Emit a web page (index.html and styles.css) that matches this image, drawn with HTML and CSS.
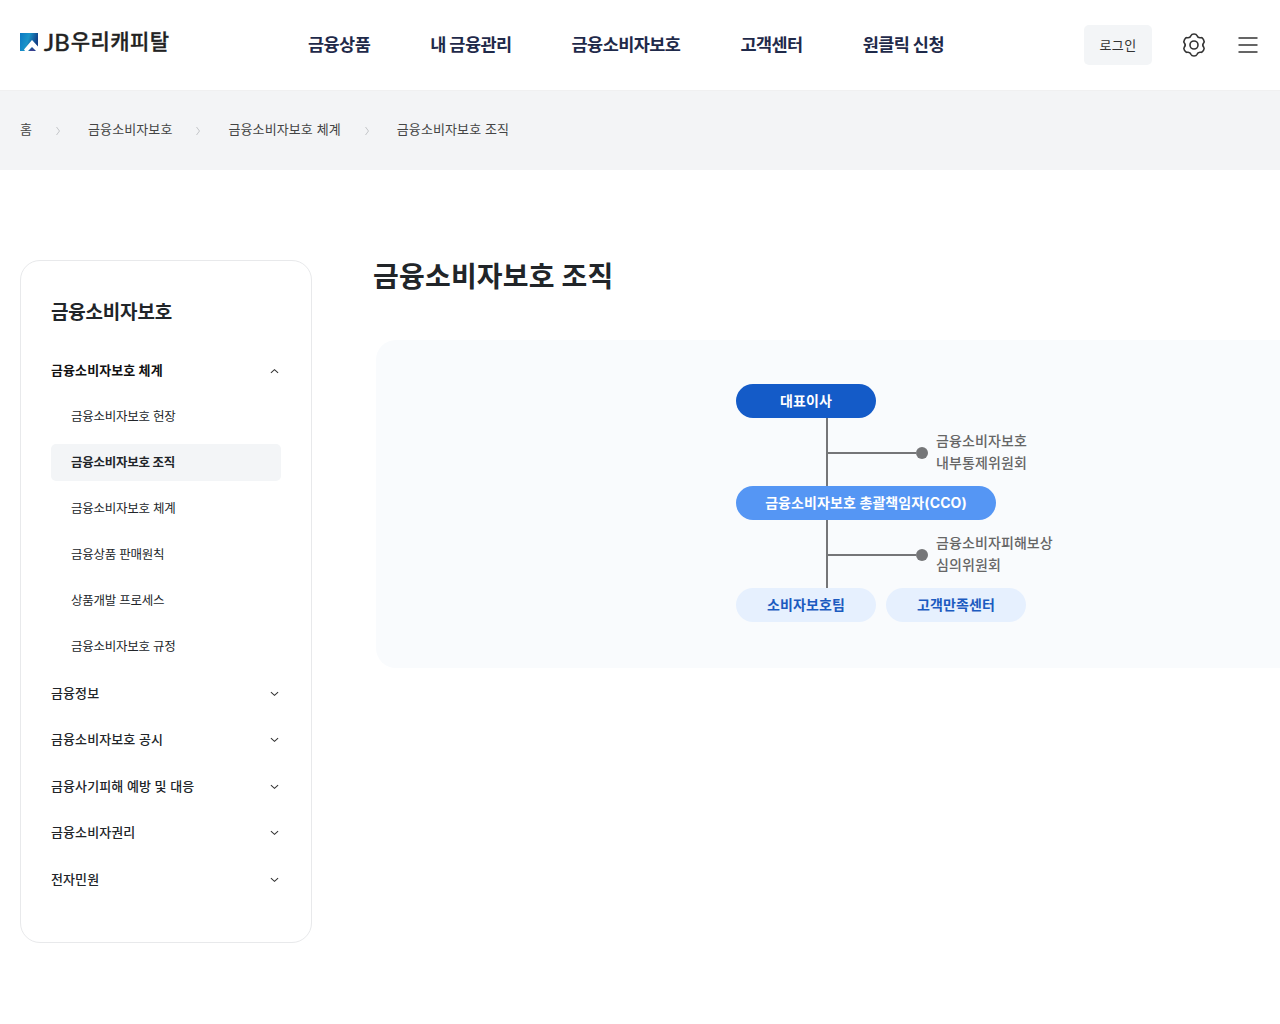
FILE: index.html
```html
<!DOCTYPE html>
<html lang="ko">
<head>
    <meta charset="UTF-8">
    <meta name="viewport" content="width=device-width, initial-scale=1.0">
    <title>금융소비자보호 조직 | JB우리캐피탈</title>
    <link rel="stylesheet" href="styles.css">
</head>
<body>
    <header class="header">
        <a href="#" class="logo">
            <svg class="logo-mark" viewBox="0 0 18 18" aria-hidden="true">
                <defs>
                    <linearGradient id="mark" x1="0" y1="0" x2="1" y2="0.3">
                        <stop offset="0" stop-color="#0a78c4"/>
                        <stop offset="0.5" stop-color="#1a94c8"/>
                        <stop offset="1" stop-color="#123f86"/>
                    </linearGradient>
                </defs>
                <rect width="18" height="18" fill="url(#mark)"/>
                <path d="M4 16.500L12 7l6 6.500V18h-2l-4-4-4 4H5z" fill="#fff"/>
                <path d="M9.500 18l2.500-3 3 3z" fill="#3b3f8f"/>
            </svg>
            <span class="logo-en">JB</span><span class="logo-ko">우리캐피탈</span>
        </a>
        <nav class="gnb">
            <a href="#">금융상품</a>
            <a href="#">내 금융관리</a>
            <a href="#">금융소비자보호</a>
            <a href="#">고객센터</a>
            <a href="#">원클릭 신청</a>
        </nav>
        <div class="util">
            <a href="#" class="login">로그인</a>
            <button type="button" class="icon-btn" aria-label="설정">
                <svg width="24" height="24" viewBox="0 0 24 24">
                    <path d="M9.080 2.440C9.800.6 14.200.6 14.920 2.440Q15.900 5.250 18.820 4.690C20.770 4.390 22.970 8.210 21.740 9.750Q19.800 12 21.740 14.250C22.970 15.790 20.770 19.610 18.820 19.310Q15.900 18.750 14.920 21.560C14.200 23.400 9.800 23.400 9.080 21.560Q8.100 18.750 5.180 19.310C3.230 19.610 1.030 15.790 2.260 14.250Q4.200 12 2.260 9.750C1.030 8.210 3.230 4.390 5.180 4.690Q8.100 5.250 9.080 2.440z"/>
                    <circle cx="12" cy="12" r="4"/>
                </svg>
            </button>
            <button type="button" class="icon-btn" aria-label="전체메뉴">
                <svg width="24" height="24" viewBox="0 0 24 24">
                    <path d="M2.500 5h19M2.500 12h19M2.500 19h19"/>
                </svg>
            </button>
        </div>
    </header>

    <div class="breadcrumb">
        <a href="#">홈</a>
        <svg class="sep" viewBox="0 0 6 10"><path d="M1.500 1l3 4-3 4"/></svg>
        <a href="#">금융소비자보호</a>
        <svg class="sep" viewBox="0 0 6 10"><path d="M1.500 1l3 4-3 4"/></svg>
        <a href="#">금융소비자보호 체계</a>
        <svg class="sep" viewBox="0 0 6 10"><path d="M1.500 1l3 4-3 4"/></svg>
        <a href="#">금융소비자보호 조직</a>
    </div>

    <div class="container">
        <aside class="side">
            <h2>금융소비자보호</h2>
            <ul class="menu">
                <li>
                    <a href="#" class="menu-link open">금융소비자보호 체계 <svg class="arrow" viewBox="0 0 10 6"><path d="M1 1l4 3.500L9 1"/></svg></a>
                    <ul class="submenu">
                        <li><a href="#">금융소비자보호 헌장</a></li>
                        <li><a href="#" class="active">금융소비자보호 조직</a></li>
                        <li><a href="#">금융소비자보호 체계</a></li>
                        <li><a href="#">금융상품 판매원칙</a></li>
                        <li><a href="#">상품개발 프로세스</a></li>
                        <li><a href="#">금융소비자보호 규정</a></li>
                    </ul>
                </li>
                <li><a href="#" class="menu-link">금융정보 <svg class="arrow" viewBox="0 0 10 6"><path d="M1 1l4 3.500L9 1"/></svg></a></li>
                <li><a href="#" class="menu-link">금융소비자보호 공시 <svg class="arrow" viewBox="0 0 10 6"><path d="M1 1l4 3.500L9 1"/></svg></a></li>
                <li><a href="#" class="menu-link">금융사기피해 예방 및 대응 <svg class="arrow" viewBox="0 0 10 6"><path d="M1 1l4 3.500L9 1"/></svg></a></li>
                <li><a href="#" class="menu-link">금융소비자권리 <svg class="arrow" viewBox="0 0 10 6"><path d="M1 1l4 3.500L9 1"/></svg></a></li>
                <li><a href="#" class="menu-link">전자민원 <svg class="arrow" viewBox="0 0 10 6"><path d="M1 1l4 3.500L9 1"/></svg></a></li>
            </ul>
        </aside>

        <main class="content">
            <h1>금융소비자보호 조직</h1>
            <div class="panel">
                <div class="org">
                    <div class="pill ceo">대표이사</div>
                    <div class="branch">
                        <span class="line"></span>
                        <span class="dot"></span>
                        <p>금융소비자보호<br>내부통제위원회</p>
                    </div>
                    <div class="pill cco">금융소비자보호 총괄책임자(CCO)</div>
                    <div class="branch">
                        <span class="line"></span>
                        <span class="dot"></span>
                        <p>금융소비자피해보상<br>심의위원회</p>
                    </div>
                    <div class="teams">
                        <div class="pill team">소비자보호팀</div>
                        <div class="pill team">고객만족센터</div>
                    </div>
                </div>
            </div>
        </main>
    </div>
</body>
</html>
```
FILE: styles.css
```css
* {
    margin: 0;
    padding: 0;
    box-sizing: border-box;
}

body {
    font-family: Inter, "Noto Sans CJK KR", sans-serif;
    font-size: 13px;
    letter-spacing: 0.1px;
    color: #212529;
    background-color: #fff;
    min-height: 100vh;
}

a {
    color: inherit;
    text-decoration: none;
    white-space: nowrap;
}

ul {
    list-style: none;
}

.header {
    display: flex;
    align-items: center;
    height: 90px;
    padding: 0 20px;
}

.logo {
    display: flex;
    align-items: center;
    width: 288px;
    height: 24px;
    margin-bottom: 6px;
    line-height: 24px;
    color: #222;
}

.logo-mark {
    width: 18px;
    height: 18px;
    margin-right: 6px;
}

.logo-en {
    font-family: Lato, sans-serif;
    font-size: 24px;
    -webkit-text-stroke: 0.5px #222;
}

.logo-ko {
    font-size: 21px;
    font-weight: 500;
    letter-spacing: 0.4px;
    margin-left: 1px;
    -webkit-text-stroke: 0.3px #222;
}

.gnb {
    display: flex;
    gap: 60px;
    font-size: 17.5px;
    font-weight: 700;
    line-height: 26px;
    letter-spacing: -0.55px;
    color: #1f2a4a;
}

.util {
    display: flex;
    align-items: center;
    gap: 30px;
    margin-left: auto;
}

.login {
    width: 68px;
    height: 40px;
    border-radius: 5px;
    background-color: #f3f5f7;
    line-height: 40px;
    text-align: center;
    letter-spacing: 0.4px;
    color: #333;
}

.icon-btn {
    width: 24px;
    height: 24px;
    border: none;
    background: none;
    cursor: pointer;
}

.icon-btn svg {
    display: block;
    fill: none;
    stroke: #333;
    stroke-width: 1.6;
}

.breadcrumb {
    display: flex;
    align-items: center;
    height: 80px;
    padding: 0 20px 4px;
    border-top: 1px solid #f0f0f1;
    background-color: #f3f4f6;
    color: #444;
}

.sep {
    width: 6px;
    height: 10px;
    margin: 4px 27px 0 23px;
    fill: none;
    stroke: #c4c6c9;
}

.container {
    display: flex;
    align-items: flex-start;
    gap: 61px;
    padding: 90px 0 0 20px;
}

.side {
    flex: none;
    width: 292px;
    height: 683px;
    padding: 37px 30px 0;
    border: 1px solid #e8e9eb;
    border-radius: 20px;
}

.side h2 {
    margin-bottom: 26px;
    font-size: 19px;
    font-weight: 700;
    line-height: 30px;
    letter-spacing: -0.2px;
}

.menu-link {
    display: flex;
    align-items: center;
    justify-content: space-between;
    height: 30px;
    margin-bottom: 16.6px;
    padding-right: 2px;
    font-weight: 500;
}

.menu-link.open {
    margin-bottom: 14px;
    font-weight: 700;
    color: #111;
}

.arrow {
    width: 9px;
    height: 6px;
    margin-top: 3px;
    fill: none;
    stroke: #333;
    stroke-width: 1.2;
}

.open .arrow {
    transform: scaleY(-1);
}

.submenu {
    display: flex;
    flex-direction: column;
    gap: 9px;
    margin-bottom: 12px;
    font-size: 12.5px;
    letter-spacing: -0.25px;
}

.submenu a {
    display: block;
    height: 37px;
    padding-left: 20px;
    border-radius: 5px;
    line-height: 37px;
}

.submenu .active {
    background-color: #f3f5f7;
    font-weight: 700;
}

.content {
    flex: 1;
}

.content h1 {
    margin: -1px 0 45px;
    font-size: 28px;
    font-weight: 700;
    line-height: 36px;
    letter-spacing: 0.2px;
}

.panel {
    height: 328px;
    margin-left: 3px;
    padding: 44px 0 0 360px;
    border-radius: 20px 0 0 20px;
    background-color: #f9fbfd;
}

.org {
    width: 320px;
    font-size: 14px;
    font-weight: 500;
}

.pill {
    width: 140px;
    height: 34px;
    border-radius: 17px;
    line-height: 34px;
    text-align: center;
    font-weight: 700;
    color: #fff;
}

.ceo {
    background-color: #145bc8;
}

.cco {
    width: 260px;
    background-color: #5596f4;
}

.branch {
    display: flex;
    align-items: center;
    height: 68px;
    margin-left: 90px;
    border-left: 2px solid #757678;
    line-height: 22px;
    color: #666;
    white-space: nowrap;
}

.line {
    width: 88px;
    height: 2px;
    margin-top: 2px;
    background-color: #757678;
}

.dot {
    width: 12px;
    height: 12px;
    margin-right: 8px;
    margin-top: 1px;
    border-radius: 50%;
    background-color: #757678;
}

.teams {
    display: flex;
    gap: 10px;
}

.team {
    background-color: #e6f0fe;
    color: #1c5bc0;
}
```
